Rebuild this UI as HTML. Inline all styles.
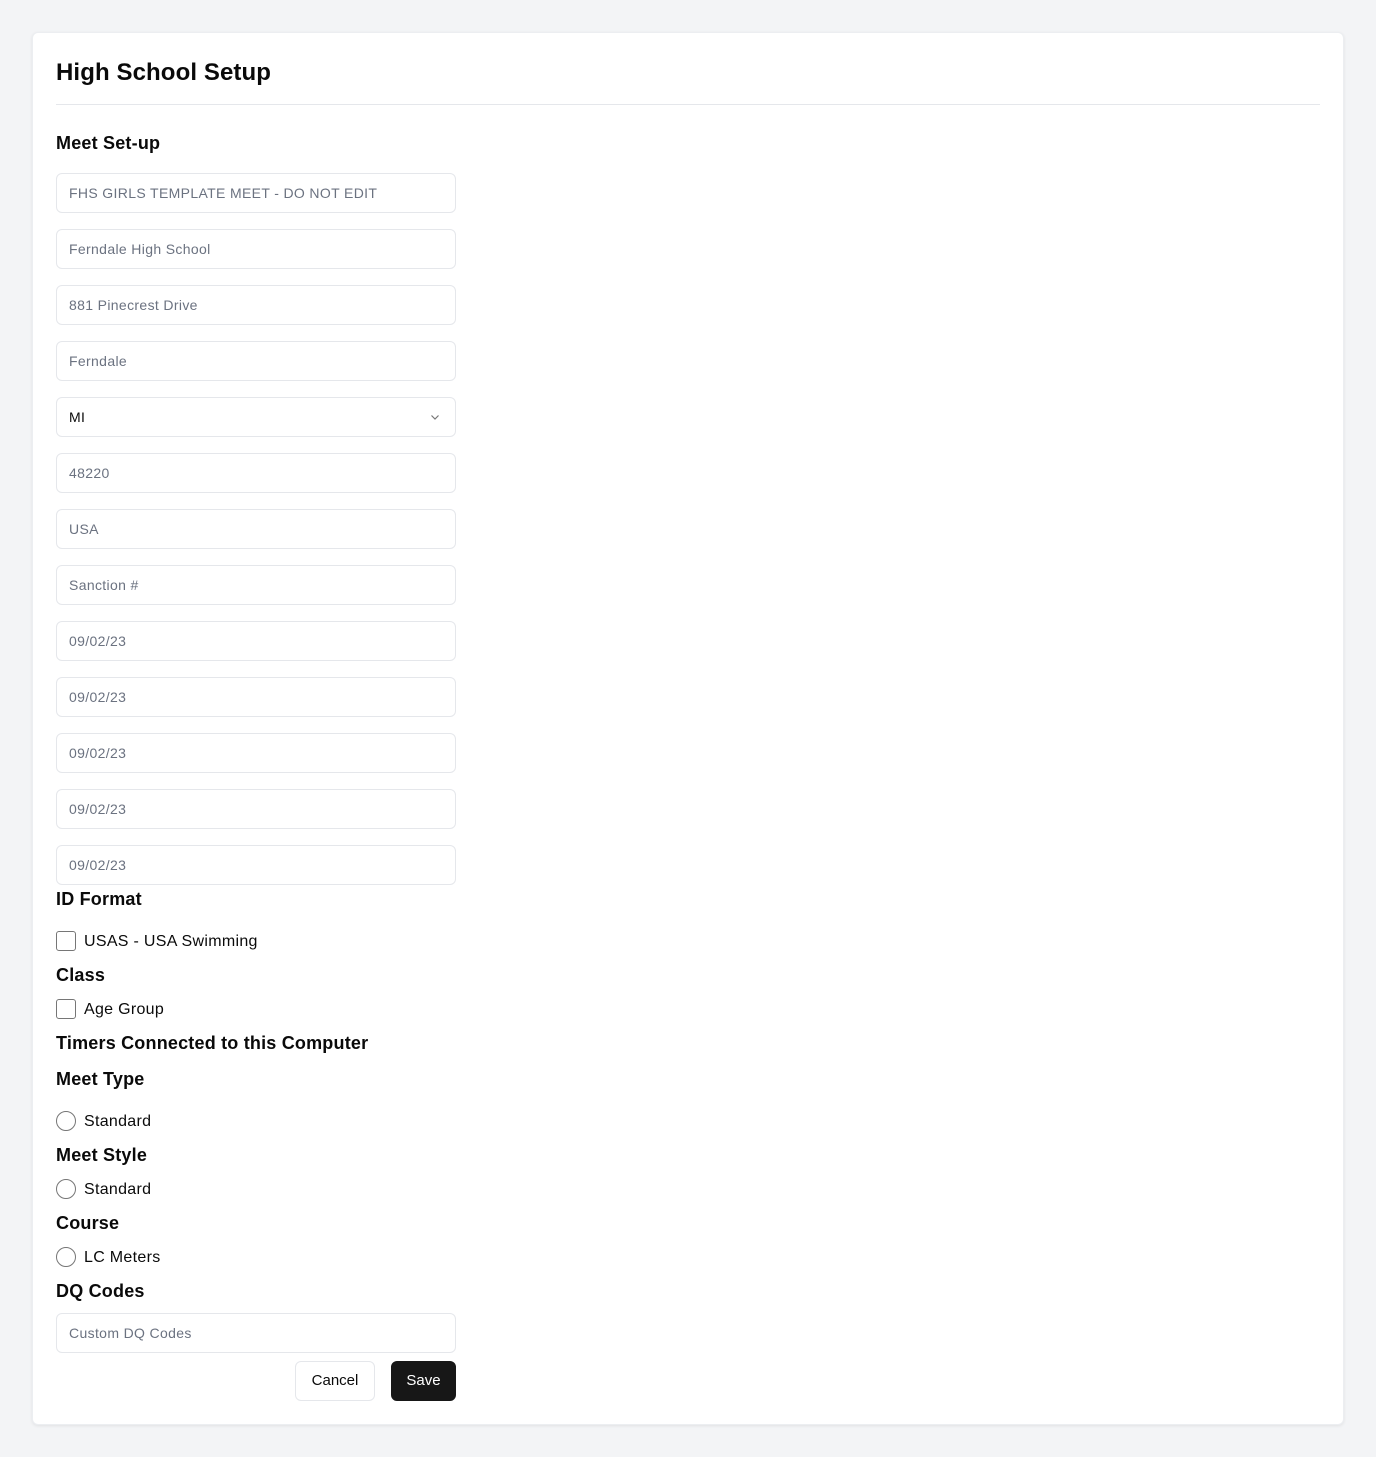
<!DOCTYPE html>
<html><head><meta charset="utf-8"><style>
*{box-sizing:border-box;margin:0;padding:0}
body{width:1376px;height:1457px;background:#f3f4f6;font-family:"Liberation Sans",Arial,sans-serif;position:relative;color:#0a0a0a}
.card{position:absolute;left:32px;top:32px;width:1312px;height:1393px;background:#fff;border-radius:6px;box-shadow:0 1px 3px rgba(0,0,0,.08);border:1px solid #eceef1}
h1{position:absolute;left:56px;top:58px;font-size:24px;font-weight:bold;line-height:30px;letter-spacing:0.1px}
.hr{position:absolute;left:56px;top:104px;width:1264px;height:1px;background:#e5e7eb}
.h{position:absolute;left:56px;font-size:18px;font-weight:bold;line-height:22px;letter-spacing:0.2px;margin-top:1px}
.in{position:absolute;left:56px;width:400px;height:40px;border:1px solid #e5e7eb;border-radius:6px;font-size:14px;color:#6b7280;padding-left:12px;line-height:39px;background:#fff;letter-spacing:0.35px}
.cb{position:absolute;left:56px;width:20px;height:20px;border:1px solid #767676;border-radius:3px}
.rd{position:absolute;left:56px;width:20px;height:20px;border:1px solid #767676;border-radius:50%}
.lb{position:absolute;left:84px;font-size:16px;line-height:20px;letter-spacing:0.3px;margin-top:1px}
.btn{position:absolute;top:1361px;height:40px;border-radius:6px;font-size:15px;line-height:38px;text-align:center;font-weight:normal}
</style></head><body>
<div class="card"></div>
<h1>High School Setup</h1>
<div class="hr"></div>
<div class="h" style="top:131px">Meet Set-up</div>
<div class="in" style="top:173px">FHS GIRLS TEMPLATE MEET - DO NOT EDIT</div>
<div class="in" style="top:229px">Ferndale High School</div>
<div class="in" style="top:285px">881 Pinecrest Drive</div>
<div class="in" style="top:341px">Ferndale</div>
<div class="in" style="top:397px;color:#0a0a0a">MI<svg style="position:absolute;right:14px;top:13px" width="12" height="12" viewBox="0 0 12 12"><path d="M2.5 4.5L6 8l3.5-3.5" fill="none" stroke="#777" stroke-width="1.2"/></svg></div>
<div class="in" style="top:453px">48220</div>
<div class="in" style="top:509px">USA</div>
<div class="in" style="top:565px">Sanction #</div>
<div class="in" style="top:621px">09/02/23</div>
<div class="in" style="top:677px">09/02/23</div>
<div class="in" style="top:733px">09/02/23</div>
<div class="in" style="top:789px">09/02/23</div>
<div class="in" style="top:845px">09/02/23</div>
<div class="h" style="top:887px">ID Format</div>
<div class="cb" style="top:931px"></div><div class="lb" style="top:931px">USAS - USA Swimming</div>
<div class="h" style="top:963px">Class</div>
<div class="cb" style="top:999px"></div><div class="lb" style="top:999px">Age Group</div>
<div class="h" style="top:1031px">Timers Connected to this Computer</div>
<div class="h" style="top:1067px">Meet Type</div>
<div class="rd" style="top:1111px"></div><div class="lb" style="top:1111px">Standard</div>
<div class="h" style="top:1143px">Meet Style</div>
<div class="rd" style="top:1179px"></div><div class="lb" style="top:1179px">Standard</div>
<div class="h" style="top:1211px">Course</div>
<div class="rd" style="top:1247px"></div><div class="lb" style="top:1247px">LC Meters</div>
<div class="h" style="top:1279px">DQ Codes</div>
<div class="in" style="top:1313px">Custom DQ Codes</div>
<div class="btn" style="left:295px;width:80px;border:1px solid #e5e7eb;background:#fff">Cancel</div>
<div class="btn" style="left:391px;width:65px;background:#171717;color:#fff;border:1px solid #171717">Save</div>
</body></html>
